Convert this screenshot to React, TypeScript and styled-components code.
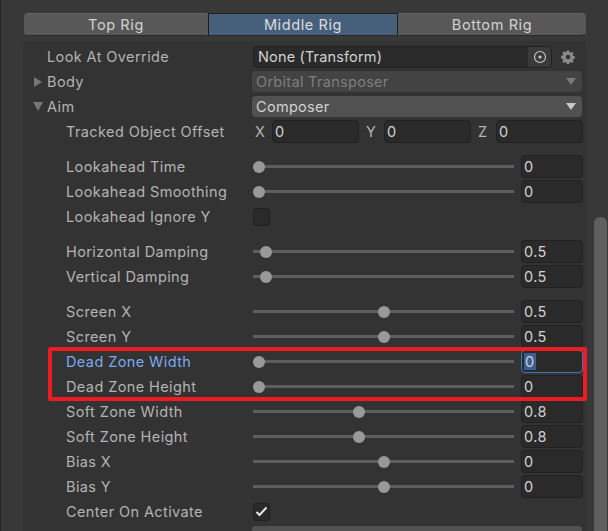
import styled, { createGlobalStyle } from 'styled-components';

const GlobalStyle = createGlobalStyle`
  html, body {
    margin: 0;
    padding: 0;
    background: #383838;
  }
`;

const Window = styled.div`
  width: 608px;
  height: 531px;
  display: flex;
  overflow: hidden;
  background: #383838;
  border-left: 1px solid #262626;
  box-sizing: border-box;
  font-family: Inter, 'Liberation Sans', sans-serif;
  font-size: 14.5px;
  letter-spacing: 0.4px;
  color: #b4b4b4;
`;

const Content = styled.div`
  width: 585px;
  padding: 13px 0 0 22px;
  box-sizing: border-box;
  flex-shrink: 0;
`;

const Tabs = styled.div`
  display: flex;
  width: 562px;
  margin-left: 1px;
  height: 23px;
`;

const Tab = styled.div<{ $active?: boolean; $width: number }>`
  width: ${({ $width }) => $width}px;
  display: flex;
  align-items: center;
  justify-content: center;
  box-sizing: border-box;
  letter-spacing: 0.6px;
  color: ${({ $active }) => ($active ? '#dcdcdc' : '#d2d2d2')};
  background: ${({ $active }) => ($active ? '#46607c' : '#585858')};
  border-top: 1px solid ${({ $active }) => ($active ? '#1f1f1f' : '#636363')};
  border-bottom: 1px solid #2a2a2a;
  border-left: 1px solid ${({ $active }) => ($active ? '#1f1f1f' : '#585858')};
  border-right: 1px solid ${({ $active }) => ($active ? '#1f1f1f' : '#585858')};

  &:first-child {
    border-radius: 4px 0 0 4px;
  }

  &:last-child {
    border-radius: 0 4px 4px 0;
  }
`;

const Panel = styled.div`
  margin-top: 5px;
  height: 500px;
  width: 563px;
  padding: 3px 0 0 24px;
  box-sizing: border-box;
  background: #333333;
`;

const Row = styled.div<{ $gap?: boolean }>`
  display: flex;
  align-items: center;
  height: 25px;
  margin-top: ${({ $gap }) => ($gap ? '10px' : '0')};
`;

const Arrow = styled.span<{ $open?: boolean }>`
  width: 0;
  height: 0;
  border-style: solid;
  border-color: transparent;
  ${({ $open }) =>
    $open
      ? 'border-width: 9px 5px 0 5px; border-top-color: #767676; margin-left: -14px; margin-right: 4px;'
      : 'border-width: 5px 0 5px 8px; border-left-color: #767676; margin-left: -13px; margin-right: 5px;'}
`;

const Label = styled.div<{ $indent?: boolean; $focused?: boolean }>`
  display: flex;
  align-items: center;
  width: ${({ $indent }) => ($indent ? '187px' : '206px')};
  margin-left: ${({ $indent }) => ($indent ? '19px' : '0')};
  flex-shrink: 0;
  white-space: nowrap;
  color: ${({ $focused }) => ($focused ? '#7baaf0' : '#b4b4b4')};
`;

const ObjectField = styled.div`
  width: 299px;
  height: 22px;
  display: flex;
  align-items: center;
  justify-content: space-between;
  box-sizing: border-box;
  padding-left: 4px;
  letter-spacing: 0.15px;
  background: #2a2a2a;
  border: 1px solid #212121;
  border-radius: 4px;
  color: #d2d2d2;
  overflow: hidden;
`;

const PickerButton = styled.div`
  width: 23px;
  height: 20px;
  display: flex;
  align-items: center;
  justify-content: center;
  background: #3a3a3a;
`;

const GearSlot = styled.div`
  margin-left: 9px;
  display: flex;
`;

const Dropdown = styled.div<{ $disabled?: boolean }>`
  width: 330px;
  height: 21px;
  margin-left: -1px;
  display: flex;
  align-items: center;
  justify-content: space-between;
  box-sizing: border-box;
  padding: 0 6px 0 4px;
  letter-spacing: 0.3px;
  border-radius: 4px;
  background: ${({ $disabled }) => ($disabled ? '#434343' : '#515151')};
  color: ${({ $disabled }) => ($disabled ? '#7e7e7e' : '#d2d2d2')};
`;

const Caret = styled.span<{ $disabled?: boolean }>`
  width: 0;
  height: 0;
  border-style: solid;
  border-width: 7px 5px 0 5px;
  border-color: ${({ $disabled }) => ($disabled ? '#7a7a7a' : '#c8c8c8')} transparent transparent;
`;

const VectorFields = styled.div`
  display: flex;
  margin-left: 2px;
`;

const AxisLabel = styled.span<{ $first?: boolean }>`
  width: ${({ $first }) => ($first ? '17px' : '18px')};
  margin-left: ${({ $first }) => ($first ? '0' : '7px')};
  flex-shrink: 0;
  display: flex;
  align-items: center;
`;

const NumberField = styled.div<{ $focused?: boolean; $width?: number }>`
  width: ${({ $width }) => $width ?? 62}px;
  height: 23px;
  display: flex;
  align-items: center;
  box-sizing: border-box;
  padding-left: 2px;
  background: #2a2a2a;
  border: 1px solid ${({ $focused }) => ($focused ? '#3a79bb' : '#212121')};
  border-radius: 4px;
  color: #d2d2d2;
`;

const Selected = styled.span`
  background: #3a5f92;
  padding: 0 1px;
`;

const SliderTrack = styled.div`
  position: relative;
  width: 261px;
  height: 3px;
  margin-right: 7px;
  background: #5e5e5e;
`;

const Thumb = styled.div`
  position: absolute;
  top: -4px;
  width: 12px;
  height: 12px;
  margin-left: -6px;
  border-radius: 50%;
  background: #999999;
`;

const Checkbox = styled.div`
  width: 17px;
  height: 18px;
  display: flex;
  align-items: center;
  justify-content: center;
  box-sizing: border-box;
  background: #2a2a2a;
  border: 1px solid #212121;
  border-radius: 3px;
`;

const Highlighted = styled.div`
  position: relative;
`;

const RedBox = styled.div`
  position: absolute;
  left: 1px;
  top: -2px;
  width: 539px;
  height: 54px;
  box-sizing: border-box;
  border: 4px solid #ed1c24;
  border-radius: 2px;
  pointer-events: none;
`;

const Gutter = styled.div`
  flex: 1;
  position: relative;
`;

const ScrollThumb = styled.div`
  position: absolute;
  top: 217px;
  left: 8px;
  right: 1px;
  height: 320px;
  border-radius: 6px;
  background: #5f5f5f;
`;

const Slider = ({ label, value, at, gap, focused }: {
  label: string;
  value: string;
  at: number;
  gap?: boolean;
  focused?: boolean;
}) => (
  <Row $gap={gap}>
    <Label $indent $focused={focused}>{label}</Label>
    <SliderTrack>
      <Thumb style={{ left: 6 + at * 249 }} />
    </SliderTrack>
    <NumberField $focused={focused}>
      {focused ? <Selected>{value}</Selected> : value}
    </NumberField>
  </Row>
);

const Target = () => (
  <svg width="14" height="14" viewBox="0 0 14 14">
    <circle cx="7" cy="7" r="5.5" fill="none" stroke="#c4c4c4" strokeWidth="1.2" />
    <circle cx="7" cy="7" r="1.6" fill="#c4c4c4" />
  </svg>
);

const Gear = () => (
  <svg width="14" height="14" viewBox="0 0 14 14">
    <path
      fill="#8a8a8a"
      fillRule="evenodd"
      d="M5.8 0.5h2.4l.3 1.7 1.1.5 1.4-1 1.7 1.7-1 1.4.5 1.1 1.7.3v2.4l-1.7.3-.5 1.1 1 1.4-1.7 1.7-1.4-1-1.1.5-.3 1.7H5.8l-.3-1.7-1.1-.5-1.4 1-1.7-1.7 1-1.4-.5-1.1-1.7-.3V5.7l1.7-.3.5-1.1-1-1.4 1.7-1.7 1.4 1 1.1-.5zM7 4.7a2.3 2.3 0 1 0 0 4.6 2.3 2.3 0 0 0 0-4.6z"
    />
  </svg>
);

const Check = () => (
  <svg width="13" height="11" viewBox="0 0 13 11">
    <path d="M1.5 6l3 3 7-7.5" fill="none" stroke="#e6e6e6" strokeWidth="2" />
  </svg>
);

const App = () => (
  <>
    <GlobalStyle />
    <Window>
      <Content>
        <Tabs>
          <Tab $width={184}>Top Rig</Tab>
          <Tab $width={190} $active>Middle Rig</Tab>
          <Tab $width={188}>Bottom Rig</Tab>
        </Tabs>
        <Panel>
          <Row>
            <Label>Look At Override</Label>
            <ObjectField>
              None (Transform)
              <PickerButton><Target /></PickerButton>
            </ObjectField>
            <GearSlot><Gear /></GearSlot>
          </Row>
          <Row>
            <Label><Arrow />Body</Label>
            <Dropdown $disabled>Orbital Transposer<Caret $disabled /></Dropdown>
          </Row>
          <Row>
            <Label><Arrow $open />Aim</Label>
            <Dropdown>Composer<Caret /></Dropdown>
          </Row>
          <Row>
            <Label $indent>Tracked Object Offset</Label>
            <VectorFields>
              <AxisLabel $first>X</AxisLabel>
              <NumberField $width={87}>0</NumberField>
              <AxisLabel>Y</AxisLabel>
              <NumberField $width={87}>0</NumberField>
              <AxisLabel>Z</AxisLabel>
              <NumberField $width={87}>0</NumberField>
            </VectorFields>
          </Row>
          <Slider gap label="Lookahead Time" value="0" at={0} />
          <Slider label="Lookahead Smoothing" value="0" at={0} />
          <Row>
            <Label $indent>Lookahead Ignore Y</Label>
            <Checkbox />
          </Row>
          <Slider gap label="Horizontal Damping" value="0.5" at={0.028} />
          <Slider label="Vertical Damping" value="0.5" at={0.028} />
          <Slider gap label="Screen X" value="0.5" at={0.5} />
          <Slider label="Screen Y" value="0.5" at={0.5} />
          <Highlighted>
            <Slider focused label="Dead Zone Width" value="0" at={0} />
            <Slider label="Dead Zone Height" value="0" at={0} />
            <RedBox />
          </Highlighted>
          <Slider label="Soft Zone Width" value="0.8" at={0.4} />
          <Slider label="Soft Zone Height" value="0.8" at={0.4} />
          <Slider label="Bias X" value="0" at={0.5} />
          <Slider label="Bias Y" value="0" at={0.5} />
          <Row>
            <Label $indent>Center On Activate</Label>
            <Checkbox><Check /></Checkbox>
          </Row>
          <Row>
            <Label $indent />
            <Dropdown />
          </Row>
        </Panel>
      </Content>
      <Gutter>
        <ScrollThumb />
      </Gutter>
    </Window>
  </>
);

export default App;
